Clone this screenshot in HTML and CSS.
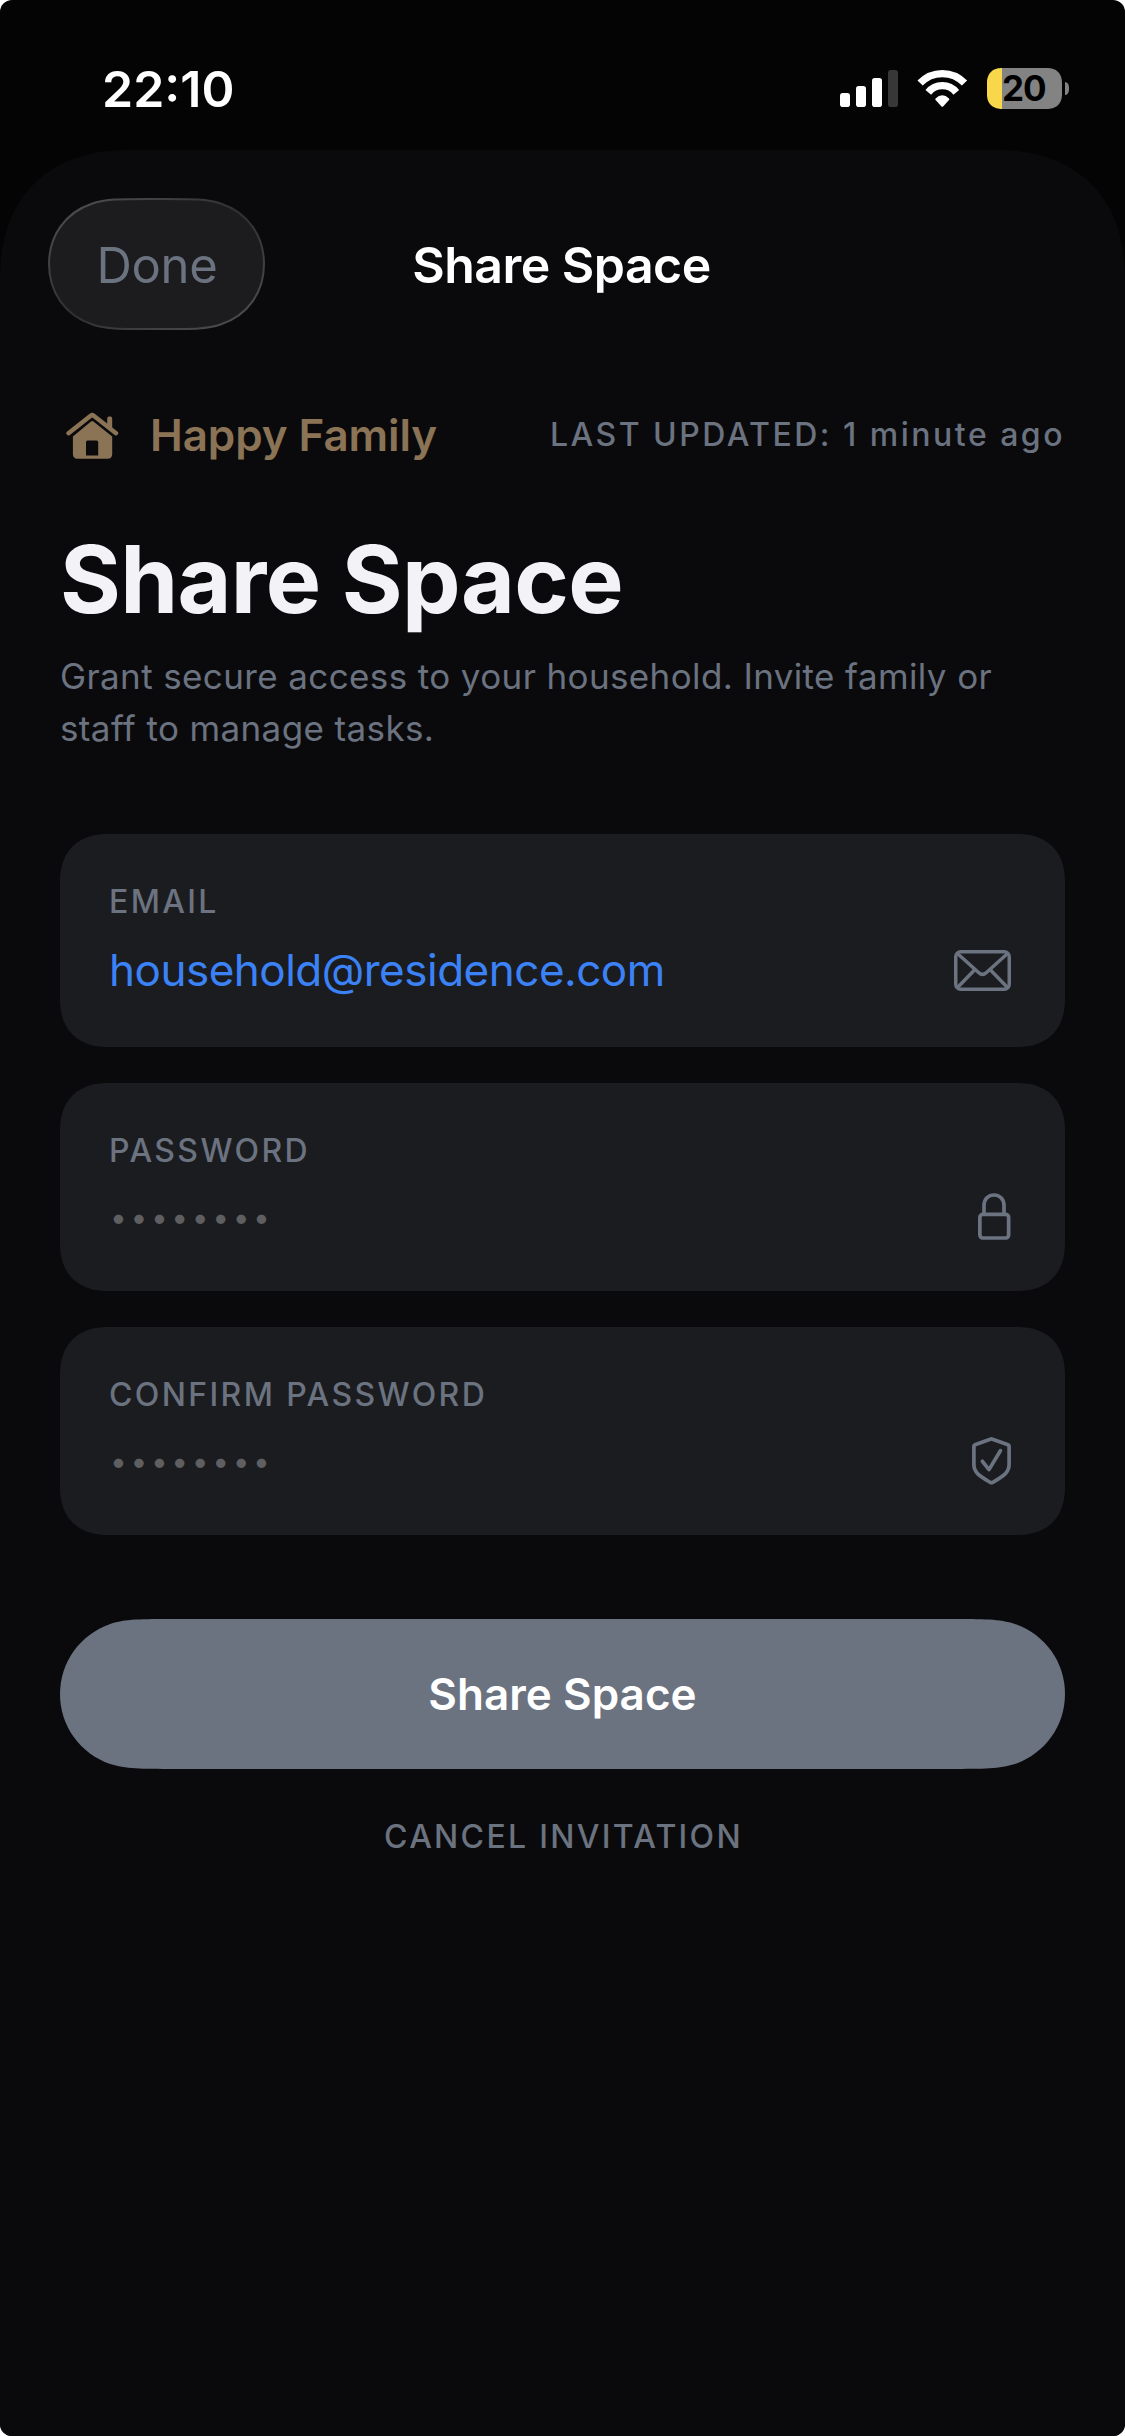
FILE: index.html
```html
<!DOCTYPE html>
<html lang="en">
<head>
<meta charset="utf-8">
<title>Share Space</title>
<link rel="stylesheet" href="styles.css">
</head>
<body>
<div class="phone">
  <div class="status-bar">
    <div class="clock">22:10</div>
    <div class="status-icons">
      <svg class="signal" width="58" height="37" viewBox="0 0 58 37" fill="#fff">
        <rect x="0" y="23" width="10" height="14" rx="2.8"/>
        <rect x="16" y="16" width="10" height="21" rx="2.8"/>
        <rect x="32" y="8" width="10" height="29" rx="2.8"/>
        <rect x="48" y="0" width="10" height="37" rx="2.8" fill="#373737"/>
      </svg>
      <svg class="wifi" width="51" height="39" viewBox="0 0 51 39">
        <g fill="none" stroke="#fff" stroke-width="7.3">
          <path d="M3.1 14.1A30.6 30.6 0 0 1 47.5 14.1"/>
          <path d="M11.3 23.4A18 18 0 0 1 39.3 23.4"/>
        </g>
        <path fill="#fff" d="M18.6 31Q17.8 30.2 18.6 29.5Q21.8 26.3 25.3 26.3Q28.8 26.3 32 29.5Q32.8 30.2 32 31L26.1 37.4Q25.3 38.2 24.5 37.4Z"/>
      </svg>
      <div class="battery"><div class="battery-body"><span class="battery-level">20</span></div><div class="battery-cap"></div></div>
    </div>
  </div>

  <div class="sheet">
    <header class="nav">
      <div class="done">
        <svg class="done-shape" width="217" height="132" viewBox="0 0 217 132">
          <defs>
            <linearGradient id="rim" x1="0" y1="0" x2="1" y2="1">
              <stop offset="0.1" stop-color="#4b4b4e"/>
              <stop offset="0.5" stop-color="#2f2f31"/>
              <stop offset="0.9" stop-color="#4b4b4e"/>
            </linearGradient>
          </defs>
          <path fill="#1c1c1e" stroke="url(#rim)" stroke-width="2" d="M100 1C72 1 57.500 1 44.500 5.500C17 14.500 1 38 1 66C1 94 17 117.500 44.500 126.500C57.500 131 72 131 100 131H117C145 131 159.500 131 172.500 126.500C200 117.500 216 94 216 66C216 38 200 14.500 172.500 5.500C159.500 1 145 1 117 1Z"/>
        </svg>
        <span class="done-text">Done</span>
      </div>
      <div class="nav-title">Share Space</div>
    </header>

    <div class="space-row">
      <svg class="house" width="54" height="48" viewBox="0 0 54 48">
        <g fill="none" stroke="#8b7355" stroke-width="4.400" stroke-linecap="round" stroke-linejoin="round">
          <path d="M2.500 22.200L25 4.500Q26.200 3.500 27.400 4.500L50 22.200"/>
        </g>
        <path fill="#8b7355" d="M41.200 15V8Q41.200 5.500 42.700 5.500H44.700Q46.200 5.500 46.200 8V19Z"/>
        <path fill="#8b7355" fill-rule="evenodd" d="M25 10.500Q26.200 9.500 27.400 10.500L46.200 25.500V43Q46.200 47.700 41.500 47.700H11.500Q6.900 47.700 6.900 43V25.500ZM21.500 29.500Q20 29.500 20 31V44.500H32.200V31Q32.200 29.500 30.700 29.500Z"/>
      </svg>
      <div class="space-name">Happy Family</div>
      <div class="updated">LAST UPDATED: 1 minute ago</div>
    </div>

    <h1 class="heading">Share Space</h1>
    <p class="lead">Grant secure access to your household. Invite family or staff to manage tasks.</p>

    <div class="fields">
      <div class="field">
        <div class="label">EMAIL</div>
        <div class="value-row email-row">
          <span class="email">household@residence.com</span>
          <svg width="57" height="41" viewBox="0 0 57 41" fill="none" stroke="#6b7280" stroke-width="3.500" stroke-linecap="round">
            <rect x="1.750" y="1.750" width="53.500" height="37.500" rx="5"/>
            <path d="M4 4L24.800 22.700Q28.500 26 32.200 22.700L53 4M4 37L20 20.500M53 37L37 20.500"/>
          </svg>
        </div>
      </div>
      <div class="field">
        <div class="label">PASSWORD</div>
        <div class="value-row">
          <span class="dots">••••••••</span>
          <svg width="33" height="47" viewBox="0 0 33 47" fill="none" stroke="#6b7280" stroke-width="3.700">
            <rect x="1.850" y="21.400" width="28.800" height="23.600" rx="3"/>
            <path d="M6 21V12.500C6 6 10.500 2 16 2S26 6 26 12.500V21"/>
          </svg>
        </div>
      </div>
      <div class="field">
        <div class="label">CONFIRM PASSWORD</div>
        <div class="value-row">
          <span class="dots">••••••••</span>
          <svg width="39" height="48" viewBox="0 0 39 48" fill="none" stroke="#6b7280" stroke-width="3.700" stroke-linecap="round" stroke-linejoin="round">
            <path d="M18.300 2.200Q19.400 1.700 20.500 2.200L36 7.800Q37.100 8.200 37.100 9.500V27.500C37.100 36 30.500 39.500 20.700 45.300Q19.400 46 18.100 45.300C8.300 39.500 1.900 36 1.900 27.500V9.500Q1.900 8.200 3 7.800Z"/>
            <path d="M10.400 24.300L17 32.600L28.400 13.700"/>
          </svg>
        </div>
      </div>
    </div>

    <div class="submit">Share Space</div>
    <div class="cancel">CANCEL INVITATION</div>
  </div>
</div>
</body>
</html>
```
FILE: styles.css
```css
* { box-sizing: border-box; margin: 0; padding: 0; }

body {
  width: 1125px;
  height: 2436px;
  background: #fff;
  font-family: Inter, "Liberation Sans", sans-serif;
  overflow: hidden;
}

.phone {
  width: 1125px;
  height: 2436px;
  display: flex;
  flex-direction: column;
  background: #040404;
  border-radius: 12px;
  overflow: hidden;
}

svg { display: block; flex: none; }

/* Status bar */
.status-bar {
  height: 150px;
  padding: 59px 56px 0 102px;
  display: flex;
  justify-content: space-between;
  color: #fff;
}
.clock { font-size: 50px; font-weight: 600; line-height: 60px; }
.status-icons { display: flex; align-items: flex-start; padding-top: 9px; }
.signal { margin-top: 2px; }
.wifi { margin: 1px 0 0 19px; }
.battery { display: flex; align-items: center; gap: 3px; margin-left: 19px; }
.battery-body {
  width: 75px;
  height: 41px;
  padding-left: 15px;
  border-radius: 15px;
  corner-shape: superellipse(1.2);
  background: linear-gradient(to right, #f9d74a 15px, #838383 15px);
}
.battery-level {
  display: block;
  color: #000;
  font-size: 35px;
  font-weight: 700;
  line-height: 41px;
  letter-spacing: -1px;
}
.battery-cap { width: 4px; height: 13px; border-radius: 0 5px 5px 0 / 0 6.5px 6.5px 0; background: #838383; }

/* Sheet */
.sheet {
  flex: 1;
  padding: 48px 60px 0;
  background: #0a0a0c;
  border-radius: 130px 130px 0 0;
  corner-shape: superellipse(1.2);
}

.nav {
  display: grid;
  grid-template-columns: 217px 1fr 217px;
  align-items: center;
  height: 132px;
  margin: 0 -12px;
}
.done {
  position: relative;
  height: 132px;
  display: flex;
  align-items: center;
  justify-content: center;
}
.done-shape { position: absolute; left: 0; top: 0; }
.done-text {
  position: relative;
  padding: 2px 0 0 1px;
  color: #6b7280;
  font-size: 49px;
  letter-spacing: -0.33px;
}
.nav-title {
  padding: 2px 2px 0 0;
  text-align: center;
  color: #fff;
  font-size: 50px;
  font-weight: 600;
  letter-spacing: -0.55px;
}

.space-row { display: flex; align-items: center; height: 60px; margin-top: 75px; padding-left: 6px; }
.space-name {
  margin-left: 30px;
  color: #8b7355;
  font-size: 44px;
  font-weight: 600;
  letter-spacing: -0.11px;
}
.updated {
  margin-left: auto;
  color: #6b7280;
  font-size: 32px;
  font-weight: 500;
  line-height: 40px;
  letter-spacing: 2.49px;
}

.heading {
  margin-top: 58px;
  color: #f2f2f7;
  font-size: 93px;
  font-weight: 700;
  line-height: 112px;
  letter-spacing: -0.66px;
}
.lead {
  max-width: 970px;
  margin-top: 15px;
  color: #6b7280;
  font-size: 35px;
  line-height: 52px;
  letter-spacing: 0.38px;
}

/* Form */
.fields { display: flex; flex-direction: column; gap: 36px; margin-top: 80px; }
.field {
  padding: 48px 54px 49px 48px;
  border-radius: 48px;
  corner-shape: superellipse(1.2);
  background: #1b1c1f;
}
.label {
  padding-left: 1px;
  color: #6b7280;
  font-size: 32px;
  font-weight: 500;
  line-height: 40px;
  letter-spacing: 2.36px;
}
.value-row { display: flex; align-items: center; justify-content: space-between; height: 51px; margin-top: 20px; }
.email-row { height: 56px; }
.email { padding-left: 1px; color: #3b82f6; font-size: 44px; line-height: 56px; letter-spacing: -0.5px; }
.dots { padding: 1px 0 0 2px; color: #5f5f62; font-size: 30px; line-height: 51px; letter-spacing: 3.57px; }

.submit {
  display: flex;
  align-items: center;
  justify-content: center;
  height: 150px;
  margin-top: 84px;
  color: #fff;
  background: #6b7280;
  font-size: 44px;
  font-weight: 600;
  letter-spacing: 0.04px;
  clip-path: path("M114.600 0C81.600 0 65.100 0 50.200 4.900C20 15.500 0 43 0 75C0 107 20 134.500 50.200 145.100C65.100 150 81.600 150 114.600 150H890.400C923.400 150 939.900 150 954.800 145.100C985 134.500 1005 107 1005 75C1005 43 985 15.500 954.800 4.900C939.900 0 923.400 0 890.400 0Z");
}
.cancel {
  margin-top: 48px;
  padding-left: 2px;
  color: #6b7280;
  text-align: center;
  font-size: 32px;
  font-weight: 500;
  line-height: 40px;
  letter-spacing: 2.3px;
}
```
